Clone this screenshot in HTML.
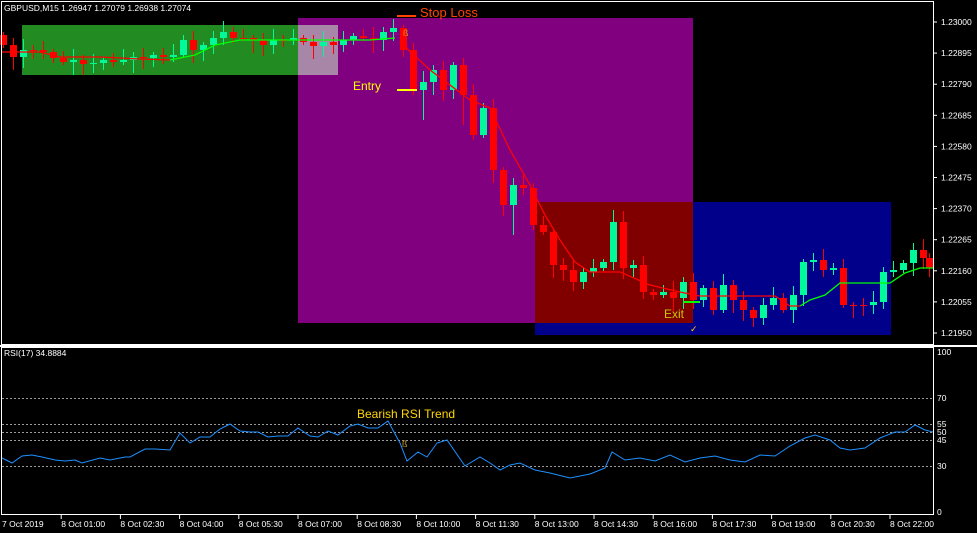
<!DOCTYPE html>
<html><head><meta charset="utf-8"><style>
body{margin:0;background:#000;width:977px;height:533px;overflow:hidden}
svg{display:block}
text{font-family:"Liberation Sans",sans-serif}
</style></head><body>
<svg id="s" width="977" height="533" xmlns="http://www.w3.org/2000/svg">
<rect width="977" height="533" fill="#000"/>
<rect x="22" y="25" width="316" height="50" fill="#228B22"/>
<rect x="298" y="18" width="395" height="305" fill="#800080"/>
<rect x="298" y="25" width="40" height="50" fill="#A886A8"/>
<rect x="535" y="202" width="356" height="133" fill="#00008B"/>
<rect x="535" y="202" width="158" height="121" fill="#800000"/>
<g id="c"></g>
<polyline fill="none" stroke="#ff0000" stroke-width="1.3" points="2,52 40,52 60,57 100,57 140,59 170,60"/>
<polyline fill="none" stroke="#00ff00" stroke-width="1.3" points="170,60 195,55 215,45 240,40 300,40 330,40 370,40 395,38"/>
<polyline fill="none" stroke="#ff0000" stroke-width="1.3" points="400,42 430,70 450,85 470,100 490,108 510,150 530,185 545,215 560,240 575,262 590,272 620,272 650,285 680,292 700,296 760,296 775,296 790,306 800,306"/>
<polyline fill="none" stroke="#00ff00" stroke-width="1.3" points="800,306 810,300 825,295 840,283 890,283 905,273 920,268 933,268"/>
<line x1="397" y1="16" x2="416" y2="16" stroke="#ff4500" stroke-width="2"/>
<text x="420" y="17" fill="#ff4500" font-size="13">Stop Loss</text>
<line x1="397" y1="90" x2="417" y2="90" stroke="#ffff00" stroke-width="2"/>
<text x="353" y="90" fill="#ffff00" font-size="12">Entry</text>
<line x1="683" y1="302" x2="700" y2="302" stroke="#00ff00" stroke-width="2"/>
<text x="664" y="318" fill="#c8c800" font-size="12">Exit</text>
<text x="690" y="332" fill="#ffd700" font-size="9">✓</text>
<text x="403" y="36" fill="#d4a020" font-size="9">ß</text>
<text x="4" y="11" fill="#fff" font-size="8.5">GBPUSD,M15  1.26947 1.27079 1.26938 1.27074</text>
<!-- frames -->
<rect x="1.5" y="1.5" width="932" height="343" fill="none" stroke="#fff" stroke-width="1"/>
<line x1="0" y1="346" x2="977" y2="346" stroke="#fff" stroke-width="2"/>
<rect x="1.5" y="347.5" width="932" height="167" fill="none" stroke="#fff" stroke-width="1"/>
<g font-size="8.5" fill="#fff" id="pa"></g>
<g stroke="#999" stroke-dasharray="2,2" stroke-width="1">
<line x1="2" y1="398.5" x2="933" y2="398.5"/><line x1="2" y1="424.5" x2="933" y2="424.5"/>
<line x1="2" y1="432.5" x2="933" y2="432.5"/><line x1="2" y1="440.5" x2="933" y2="440.5"/>
<line x1="2" y1="466.5" x2="933" y2="466.5"/></g>
<text x="4" y="356" fill="#fff" font-size="8.5">RSI(17) 34.8884</text>
<text x="357" y="418" fill="#ffd700" font-size="12">Bearish RSI Trend</text>
<text x="402" y="447" fill="#d4a020" font-size="9">ß</text>
<polyline fill="none" stroke="#1e90ff" stroke-width="1" points="2,458 12,463 22,456 32,455 42,457 55,460 65,461 75,460 82,463 100,458 110,460 125,457 130,457 145,449 155,449 170,450 180,433 190,443 200,437 210,437 220,429 230,424 240,431 250,432 258,432 268,437 278,436 288,436 298,428 310,436 318,437 328,431 338,435 350,426 358,424 368,428 378,428 388,421 400,443 407,461 418,452 427,457 437,443 447,440 465,466 480,457 490,463 500,470 510,465 520,463 535,470 550,473 570,478 590,474 605,468 612,452 625,460 640,458 655,461 670,455 685,462 700,458 715,456 730,460 745,462 760,455 775,456 790,446 805,438 815,435 830,440 840,448 850,450 865,448 880,438 895,432 905,432 915,425 925,430 933,432"/>
<g font-size="8.5" fill="#fff">
<text x="937" y="355">100</text><text x="937" y="401">70</text><text x="937" y="427">55</text><text x="937" y="435">50</text><text x="937" y="443">45</text><text x="937" y="469">30</text><text x="937" y="515">0</text>
</g>
<g font-size="8.5" fill="#fff" id="tl"></g>
</svg>
<script>
var NS="http://www.w3.org/2000/svg";
function el(n,a,p){var e=document.createElementNS(NS,n);for(var k in a)e.setAttribute(k,a[k]);p.appendChild(e);return e;}
var C=[45,57,50,50,52,58,62,60,64,63,60,62,60,57,58,55,57,55,40,50,45,38,32,38,38,40,45,40,40,38,42,46,42,45,40,36,38,40,32,28,50,90,82,70,90,65,95,135,108,170,205,185,188,225,232,265,270,282,272,268,262,222,268,265,292,295,292,298,282,300,288,310,285,300,310,318,305,298,310,295,262,260,270,268,305,305,305,302,272,270,263,250,258,268];
var g=document.getElementById('c');var o=35;
for(var i=0;i<C.length;i++){var x=3+10*i;if(x>929)x=929;var c=C[i];var t=Math.min(o,c),b=Math.max(o,c);
var hw=3+((i*7)%5)*2,lw=3+((i*11)%6)*2;if(i==61){hw=12;lw=8}if(i==42||i==46)lw=30;if(i==51)lw=30;
var col=c<o?"#00fa9a":"#ff0000";
el('line',{x1:x+0.5,y1:t-hw,x2:x+0.5,y2:b+lw,stroke:col,'stroke-width':1},g);
el('rect',{x:x-3,y:t,width:7,height:Math.max(1,b-t),fill:col},g);o=c;}
var pa=document.getElementById('pa');
var P=["1.23000","1.22895","1.22790","1.22685","1.22580","1.22475","1.22370","1.22265","1.22160","1.22055","1.21950"];
for(var i=0;i<P.length;i++){var y=22+i*31.1;el('line',{x1:933,y1:y,x2:937,y2:y,stroke:'#fff'},pa);var t=el('text',{x:941,y:y+3},pa);t.textContent=P[i];}
var tl=document.getElementById('tl');
var T=["7 Oct 2019","8 Oct 01:00","8 Oct 02:30","8 Oct 04:00","8 Oct 05:30","8 Oct 07:00","8 Oct 08:30","8 Oct 10:00","8 Oct 11:30","8 Oct 13:00","8 Oct 14:30","8 Oct 16:00","8 Oct 17:30","8 Oct 19:00","8 Oct 20:30","8 Oct 22:00"];
for(var i=0;i<T.length;i++){var x=2+i*59.2;if(i)el('line',{x1:x,y1:515,x2:x,y2:519,stroke:'#fff'},tl);var t=el('text',{x:x,y:527},tl);t.textContent=T[i];}
</script>
</body></html>
